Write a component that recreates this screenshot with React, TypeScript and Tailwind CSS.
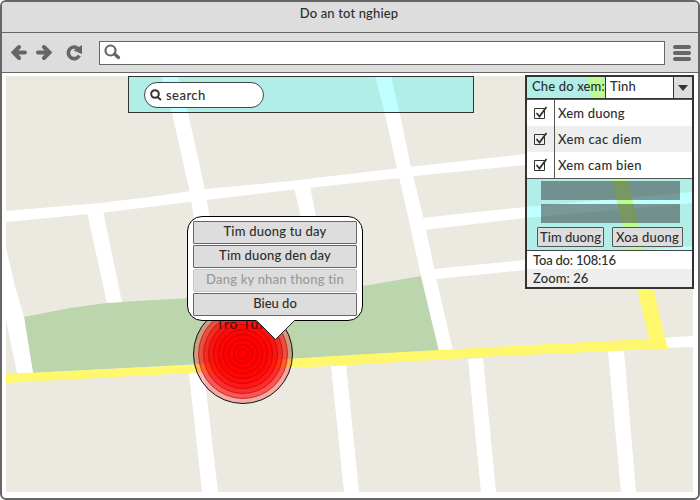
import React from "react";

const FONT = "font-['Lato','Noto_Sans',sans-serif] font-medium text-[#2d2d2d] [font-variant-ligatures:none]";

function CityMap() {
  const rings = [49.5, 44.5, 39.5, 34.5, 29.5, 24.5, 19.5, 14.5, 9.5, 5];
  return (
    <svg className="block" width="687" height="416" viewBox="6 76 687 416">
      <rect x="6" y="76" width="687" height="416" fill="#ece9e1" />
      <path d="M24 317 L70 308 L110 302.500 L190 298 L363 286 L421 276 L439 351 L33 373Z" fill="#bbd5ac" />
      <g fill="#fff">
        <path d="M6 211 L100 203 L150 197 L205 189 L290 181 L400 168 L525 154 L693 138 L693 149 L525 165 L415 176 L400 178 L290 190 L206 200 L100 213 L6 222Z" />
        <path d="M375 76 L391 76 L399 110 L411 167 L424 220 L437 282 L453 351 L439 351 L421 276 L408 216 L397 168 L384 110Z" />
        <path d="M422 218 L525 207 L693 192 L693 203 L525 218 L424 230Z" />
        <path d="M433 269 L525 260 L693 246 L693 257 L525 270 L436 279Z" />
        <path d="M161 76 L178 76 L188 113 L205 190 L211 225 L195 225 L190 193 L172 113Z" />
        <path d="M87 212 L103 211 L122 302 L107 303Z" />
        <path d="M6 248 L15 286 L24 317 L33 373 L17 373 L6 320Z" />
        <path d="M294 187 L310 186 L317 222 L302 222Z" />
        <path d="M189 373 L204 372 L218 492 L202 492Z" />
        <path d="M331 366 L346 365 L359 492 L344 492Z" />
        <path d="M468 359 L483 358 L496 492 L481 492Z" />
        <path d="M608 351 L624 351 L636 492 L621 492Z" />
        <path d="M660 338 L693 336 L693 347 L660 348Z" />
      </g>
      <path d="M6 374 L190 365 L350 355 L439 350 L530 345 L649 339 L628 249 L612 180 L600 130 L586 76 L602 76 L614 120 L628 180 L644 249 L668 350 L655 349 L500 356 L350 365 L190 373 L6 383Z" fill="#fff86c" />
      {rings.map((r, i) => (
        <circle key={r} cx="243" cy="354" r={r} fill="#ff0000" fillOpacity={i ? 0.48 : 0.27} stroke={i ? "#c00000" : "#111"} strokeOpacity={i ? 0.65 : 1} />
      ))}
      <text x="216" y="328.5" fontSize="14" textLength="51" fill="#3a1010" fillOpacity="0.85" className="font-['Lato','Noto_Sans',sans-serif] font-medium">Tro Tun</text>
    </svg>
  );
}

function CheckRow({ label, tracking, shade }: { label: string; tracking: string; shade?: boolean }) {
  return (
    <div className={`flex h-[26px] ${shade ? "bg-[#eee]" : "bg-white"}`}>
      <div className="flex w-[28px] items-center justify-center border-r border-[#555]">
        <svg width="15" height="14" viewBox="0 0 15 14" fill="none" stroke="#333">
          <path d="M1.500 2.500h10v10h-10z" />
          <path d="M3.500 7l3 3.500L13.500 1" strokeWidth="1.800" />
        </svg>
      </div>
      <span className={`pl-[3px] text-[13px] leading-[26px] ${tracking}`}>{label}</span>
    </div>
  );
}

function LayerPanel() {
  return (
    <div className="absolute top-[75px] left-[525px] flex h-[214px] w-[169px] flex-col border-2 border-t border-[#333] whitespace-nowrap">
      <div className="flex h-[23px] shrink-0 border-y border-[#333]">
        <div className="w-[78px] bg-[#00ffff]/25 pl-[5px] text-[13px] leading-[19px] tracking-[0.15px]">Che do xem:</div>
        <div className="flex-1 border-l border-[#333] bg-white pl-[4px] text-[13px] leading-[19px] tracking-[0.1px]">Tinh</div>
        <div className="flex w-[19px] items-center justify-center border-l border-[#333] bg-[#ddd]">
          <svg width="10" height="6"><path d="M0 0h10L5 6z" fill="#333" /></svg>
        </div>
      </div>
      <div className="h-[80px] shrink-0 border-y border-[#555]">
        <CheckRow label="Xem duong" tracking="tracking-[0.2px]" />
        <CheckRow label="Xem cac diem" tracking="tracking-[0.4px]" shade />
        <CheckRow label="Xem cam bien" tracking="tracking-[0.3px]" />
      </div>
      <div className="flex h-[71px] shrink-0 flex-col bg-[#00ffff]/25 pt-[2px] pl-[14px]">
        <div className="h-[19px] w-[139px] bg-[#333]/50" />
        <div className="mt-[4px] h-[19px] w-[139px] bg-[#333]/50" />
        <div className="mt-[4px] -ml-[4px] flex gap-[8px] text-[13px] leading-[17px]">
          <button className="h-[20px] w-[67px] rounded-[1px] border border-[#555] bg-[#ddd]">Tim duong</button>
          <button className="h-[20px] w-[71px] rounded-[1px] border border-[#555] bg-[#ddd] tracking-[0.2px]">Xoa duong</button>
        </div>
      </div>
      <div className="flex h-[37px] shrink-0 flex-col border-t border-[#444] text-[13px]">
        <div className="h-[18px] bg-white pl-[6px] leading-[18px] tracking-[-0.2px]">Toa do: 108:16</div>
        <div className="h-[18px] bg-[#eee] pl-[6px] leading-[18px] tracking-[0.1px]">Zoom: 26</div>
      </div>
    </div>
  );
}

function ContextMenu() {
  const item = "h-[23px] rounded-[1px] border border-[#666] bg-[#ddd] pb-[3px] text-[13px] leading-[18px]";
  return (
    <div className="absolute top-[216px] left-[187px] h-[105px] w-[176px] rounded-[15px] border border-black bg-white px-[5px] pt-[4px]">
      <div className="flex flex-col gap-px">
        <button className={`${item} tracking-[0.2px]`}>Tim duong tu day</button>
        <button className={`${item} tracking-[0.15px]`}>Tim duong den day</button>
        <button className="h-[23px] rounded-[2px] border border-[#c8c8c8] bg-[#ddd] pb-[3px] text-[13px] leading-[18px] tracking-[0.2px] text-[#999]">Dang ky nhan thong tin</button>
        <button className={item}>Bieu do</button>
      </div>
      <svg className="absolute top-[102px] left-[67px]" width="42" height="22">
        <path d="M1 0L1.500 1.500L20.500 20.500L39.500 1.500L40 0Z" fill="#fff" />
        <path d="M1.500 1.500L20.500 20.500L39.500 1.500" fill="none" stroke="#222" />
      </svg>
    </div>
  );
}

export default function App() {
  return (
    <div className={`relative flex h-[500px] w-[700px] flex-col overflow-hidden rounded-[6px] border-2 border-[#666] bg-white ${FONT}`}>
      <header className="h-[31px] shrink-0 border-b border-[#666] bg-[#ddd] pr-[2px] text-center text-[13px] leading-[23px] tracking-[0.15px]">Do an tot nghiep</header>
      <nav className="flex h-[40px] shrink-0 items-center border-b border-[#666] bg-[#ddd] pl-[9px]">
        <svg width="80" height="20" viewBox="11 43 80 20" fill="none" stroke="#666" strokeWidth="4" strokeLinecap="round">
          <path d="M25 52.500H14M19 47l-5.500 5.500L19 58M38 52.500h11M44 47l5.500 5.500L44 58" />
          <path d="M78 48.500A5.800 5.800 0 1 0 79.300 55.500" strokeWidth="3.600" strokeLinecap="butt" />
          <path d="M82 45v9l-8.500-3.500z" fill="#666" stroke="none" />
        </svg>
        <div className="ml-[8px] flex h-[24px] w-[566px] items-center border border-[#666] bg-white pb-px pl-[4px]">
          <svg width="17" height="16" viewBox="0 0 17 16" fill="none" stroke="#666">
            <circle cx="6.500" cy="6.500" r="5" strokeWidth="2.200" />
            <path d="M10.500 10L14.500 13.500" strokeWidth="3.400" strokeLinecap="round" />
          </svg>
        </div>
        <div className="ml-[8px] flex flex-col gap-[2px]">
          <div className="h-[4px] w-[18px] rounded-full bg-[#666]" />
          <div className="h-[4px] w-[18px] rounded-full bg-[#666]" />
          <div className="h-[4px] w-[18px] rounded-full bg-[#666]" />
        </div>
      </nav>
      <main className="pt-[3px] pl-[4px]">
        <CityMap />
      </main>
      <div className="absolute -top-[2px] -left-[2px]">
        <div className="absolute top-[76px] left-[128px] h-[37px] w-[346px] border border-[#333] bg-[#00ffff]/25 pt-[5px] pl-[15px]">
          <div className="flex h-[26px] w-[120px] items-center rounded-full border border-[#444] bg-white pl-[5px]">
            <svg width="12" height="12" fill="none" stroke="#333">
              <circle cx="5" cy="5" r="3.800" strokeWidth="2" />
              <path d="M7.500 8l3.500 3" strokeWidth="2" />
            </svg>
            <span className="-mt-px pl-[4px] text-[13px] leading-[20px] tracking-[0.45px]">search</span>
          </div>
        </div>
        <ContextMenu />
        <LayerPanel />
      </div>
    </div>
  );
}
